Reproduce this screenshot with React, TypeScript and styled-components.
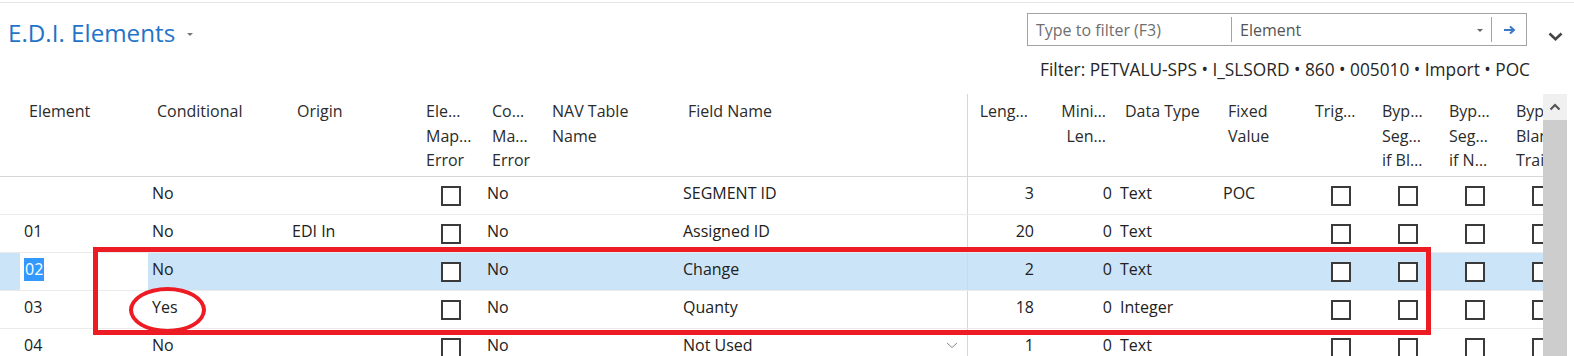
import React from 'react'
import styled, { createGlobalStyle } from 'styled-components'

const GlobalStyle = createGlobalStyle`
  html, body {
    margin: 0;
    padding: 0;
    background: #fff;
  }
  body {
    width: 1574px;
    height: 356px;
    overflow: hidden;
    font-family: "Segoe UI", "Open Sans", sans-serif;
    font-size: 16px;
    color: #212121;
  }
`

const COLS =
  '20px 128px 140px 129px 66px 60px 136px 288px 71px 78px 103px 87px 67px 67px 67px 67px'

const RED = '#ed1c24'

const Page = styled.div`
  position: relative;
  width: 1574px;
  height: 356px;
  padding-top: 2px;
  box-sizing: border-box;
  overflow: hidden;
`

const TopArea = styled.div`
  height: 92px;
  box-sizing: border-box;
  border-top: 1px solid #e6e6e6;
  display: flex;
  justify-content: space-between;
  align-items: flex-start;
`

const TitleWrap = styled.div`
  display: flex;
  align-items: center;
  padding: 14px 0 0 8px;
`

const Title = styled.h1`
  margin: 0;
  font-size: 24.2px;
  line-height: 32px;
  font-weight: 400;
  color: #1f74c8;
`

const TitleCaret = styled.span`
  margin-left: 12px;
  margin-top: 2px;
  width: 0;
  height: 0;
  border-left: 3px solid transparent;
  border-right: 3px solid transparent;
  border-top: 3px solid #777;
`

const FilterGroup = styled.div`
  display: grid;
  grid-template-columns: 500px 36px;
  padding: 10px 11px 0 0;
`

const FilterBox = styled.div`
  height: 33px;
  box-sizing: border-box;
  border: 1px solid #a3a3a3;
  display: flex;
  align-items: center;
`

const Divider = styled.span`
  align-self: stretch;
  width: 1px;
  margin: 3px 0;
  background: #a3a3a3;
`

const FilterInput = styled.div`
  width: 203px;
  padding-left: 8px;
  box-sizing: border-box;
  color: #6f6f6f;
  line-height: 24px;
`

const FieldSelect = styled.div`
  flex: 1;
  display: flex;
  align-items: center;
  justify-content: space-between;
  padding: 0 8px;
  color: #555;
  line-height: 24px;
`

const SmallCaret = styled.span`
  width: 0;
  height: 0;
  border-left: 3px solid transparent;
  border-right: 3px solid transparent;
  border-top: 3px solid #666;
  margin-top: 1px;
`

const GoButton = styled.div`
  width: 34px;
  display: flex;
  justify-content: center;
  align-items: center;
`

const Collapse = styled.div`
  display: flex;
  justify-content: flex-end;
  padding-top: 19px;
`

const FilterText = styled.div`
  grid-column: 1;
  margin: 12px -3px 0 -40px;
  text-align: right;
  font-size: 17.3px;
  line-height: 24px;
  color: #262626;
  white-space: nowrap;
`

const Main = styled.div`
  display: flex;
  height: 262px;
`

const GridArea = styled.div`
  width: 1543px;
  overflow: hidden;
`

const HeaderRow = styled.div`
  display: grid;
  grid-template-columns: ${COLS};
  height: 83px;
  box-sizing: border-box;
  border-bottom: 1px solid #d6d6d6;
`

const HeadCell = styled.div<{ $right?: boolean; $sep?: boolean }>`
  padding: 5px ${(p) => (p.$right ? '10px' : '0')} 0 ${(p) => (p.$right ? '0' : '9px')};
  text-align: ${(p) => (p.$right ? 'right' : 'left')};
  line-height: 24.5px;
  color: #2b2b2b;
  white-space: nowrap;
  overflow: hidden;
  border-left: ${(p) => (p.$sep ? '1px solid #d6d6d6' : 'none')};
`

const Row = styled.div<{ $selected?: boolean }>`
  display: grid;
  grid-template-columns: ${COLS};
  height: 38px;
  box-sizing: border-box;
  border-bottom: 1px solid #ebebeb;
  background: ${(p) => (p.$selected ? '#cce4f7' : '#fff')};
`

const Cell = styled.div<{ $right?: boolean; $sep?: boolean; $edit?: boolean }>`
  display: flex;
  align-items: center;
  justify-content: ${(p) => (p.$right ? 'flex-end' : 'space-between')};
  padding: 0 ${(p) => (p.$right ? '4px' : '9px')} 5px 4px;
  line-height: 24px;
  white-space: nowrap;
  overflow: hidden;
  border-left: ${(p) => (p.$sep ? '1px solid #d6d6d6' : 'none')};
  background: ${(p) => (p.$edit ? '#fff' : 'transparent')};
`

const CheckCell = styled.div`
  display: flex;
  align-items: center;
  justify-content: center;
  padding-left: 2px;
`

const Box = styled.span`
  width: 20px;
  height: 20px;
  box-sizing: border-box;
  border: 2px solid #3a3a3a;
  background: #fff;
  margin-top: 1px;
`

const Selected = styled.span`
  display: inline-block;
  background: #3399ff;
  color: #fff;
  padding: 0 1px;
  line-height: 23px;
`

const Scrollbar = styled.div`
  width: 24px;
  display: flex;
  flex-direction: column;
  background: #cdcdcd;
`

const ScrollUp = styled.div`
  height: 26px;
  background: #f0f0f0;
  display: flex;
  align-items: center;
  justify-content: center;
`

const Gutter = styled.div`
  width: 7px;
  background: #fff;
`

const RedBox = styled.div`
  position: absolute;
  left: 93px;
  top: 247px;
  width: 1338px;
  height: 88px;
  box-sizing: border-box;
  border: 5px solid ${RED};
  pointer-events: none;
`

const RedEllipse = styled.div`
  position: absolute;
  left: 129px;
  top: 287px;
  width: 77px;
  height: 46px;
  box-sizing: border-box;
  border: 4.5px solid ${RED};
  border-radius: 50%;
  pointer-events: none;
`

const headers: { lines: string[]; right?: boolean; sep?: boolean }[] = [
  { lines: [] },
  { lines: ['Element'] },
  { lines: ['Conditional'] },
  { lines: ['Origin'] },
  { lines: ['Ele…', 'Map…', 'Error'] },
  { lines: ['Co…', 'Ma…', 'Error'] },
  { lines: ['NAV Table', 'Name'] },
  { lines: ['Field Name'] },
  { lines: ['Leng…'], right: true, sep: true },
  { lines: ['Mini…', 'Len…'], right: true },
  { lines: ['Data Type'] },
  { lines: ['Fixed', 'Value'] },
  { lines: ['Trig…'] },
  { lines: ['Byp…', 'Seg…', 'if Bl…'] },
  { lines: ['Byp…', 'Seg…', 'if N…'] },
  { lines: ['Byp', 'Blan', 'Trai'] },
]

interface Line {
  element: string
  conditional: string
  origin: string
  field: string
  length: number
  minLength: number
  dataType: string
  fixed: string
  selected?: boolean
  lookup?: boolean
}

const lines: Line[] = [
  { element: '', conditional: 'No', origin: '', field: 'SEGMENT ID', length: 3, minLength: 0, dataType: 'Text', fixed: 'POC' },
  { element: '01', conditional: 'No', origin: 'EDI In', field: 'Assigned ID', length: 20, minLength: 0, dataType: 'Text', fixed: '' },
  { element: '02', conditional: 'No', origin: '', field: 'Change', length: 2, minLength: 0, dataType: 'Text', fixed: '', selected: true },
  { element: '03', conditional: 'Yes', origin: '', field: 'Quanty', length: 18, minLength: 0, dataType: 'Integer', fixed: '' },
  { element: '04', conditional: 'No', origin: '', field: 'Not Used', length: 1, minLength: 0, dataType: 'Text', fixed: '', lookup: true },
]

const ArrowIcon = () => (
  <svg width="13" height="10" viewBox="0 0 13 10">
    <path d="M1 5 H11 M7 1.5 L11 5 L7 8.5" fill="none" stroke="#3b78c3" strokeWidth="2" />
  </svg>
)

const ChevronDown = () => (
  <svg width="15" height="9" viewBox="0 0 15 9">
    <path d="M1.5 1.5 L7.5 7.2 L13.5 1.5" fill="none" stroke="#444" strokeWidth="2.6" />
  </svg>
)

const ChevronUp = () => (
  <svg width="12" height="8" viewBox="0 0 12 8">
    <path d="M1.5 6.5 L6 2 L10.5 6.5" fill="none" stroke="#555" strokeWidth="2.2" />
  </svg>
)

const LookupChevron = () => (
  <svg width="12" height="7" viewBox="0 0 12 7">
    <path d="M1 1 L6 5.5 L11 1" fill="none" stroke="#8a8a8a" strokeWidth="1" />
  </svg>
)

export default function App() {
  return (
    <Page>
      <GlobalStyle />
      <TopArea>
        <TitleWrap>
          <Title>E.D.I. Elements</Title>
          <TitleCaret />
        </TitleWrap>
        <FilterGroup>
          <FilterBox>
            <FilterInput>Type to filter (F3)</FilterInput>
            <Divider />
            <FieldSelect>
              Element
              <SmallCaret />
            </FieldSelect>
            <Divider />
            <GoButton>
              <ArrowIcon />
            </GoButton>
          </FilterBox>
          <Collapse>
            <ChevronDown />
          </Collapse>
          <FilterText>Filter: PETVALU-SPS • I_SLSORD • 860 • 005010 • Import • POC</FilterText>
        </FilterGroup>
      </TopArea>

      <Main>
        <GridArea>
          <HeaderRow>
            {headers.map((h, i) => (
              <HeadCell key={i} $right={h.right} $sep={h.sep}>
                {h.lines.map((l, j) => (
                  <div key={j}>{l}</div>
                ))}
              </HeadCell>
            ))}
          </HeaderRow>
          {lines.map((r, i) => (
            <Row key={i} $selected={r.selected}>
              <Cell />
              <Cell $edit={r.selected}>
                {r.selected ? <Selected>{r.element}</Selected> : r.element}
              </Cell>
              <Cell>{r.conditional}</Cell>
              <Cell>{r.origin}</Cell>
              <CheckCell>
                <Box />
              </CheckCell>
              <Cell>No</Cell>
              <Cell />
              <Cell>
                {r.field}
                {r.lookup && <LookupChevron />}
              </Cell>
              <Cell $right $sep>
                {r.length}
              </Cell>
              <Cell $right>{r.minLength}</Cell>
              <Cell>{r.dataType}</Cell>
              <Cell>{r.fixed}</Cell>
              <CheckCell>
                <Box />
              </CheckCell>
              <CheckCell>
                <Box />
              </CheckCell>
              <CheckCell>
                <Box />
              </CheckCell>
              <CheckCell>
                <Box />
              </CheckCell>
            </Row>
          ))}
        </GridArea>
        <Scrollbar>
          <ScrollUp>
            <ChevronUp />
          </ScrollUp>
        </Scrollbar>
        <Gutter />
      </Main>

      <RedBox />
      <RedEllipse />
    </Page>
  )
}
